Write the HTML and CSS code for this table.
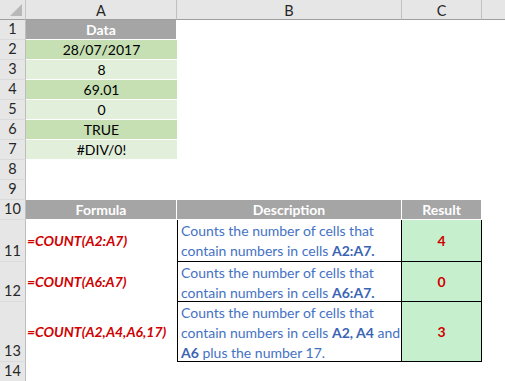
FILE: index.html
```html
<!DOCTYPE html>
<html lang="en">
<head>
<meta charset="utf-8">
<title>COUNT function</title>
<link rel="stylesheet" href="styles.css">
</head>
<body>
<div class="sheet">
  <div class="corner"><svg class="tri" width="12" height="12" viewBox="0 0 12 12"><polygon points="12,0 12,12 0,12" fill="#b8b8b8"/></svg></div>
  <div class="colhdr">A</div>
  <div class="colhdr">B</div>
  <div class="colhdr">C</div>
  <div class="colhdr blank"></div>

  <div class="rowhdr">1</div>
  <div class="cell head">Data</div>
  <div class="cell"></div><div class="cell"></div><div class="cell"></div>

  <div class="rowhdr">2</div>
  <div class="cell dark">28/07/2017</div>
  <div class="cell"></div><div class="cell"></div><div class="cell"></div>

  <div class="rowhdr">3</div>
  <div class="cell light">8</div>
  <div class="cell"></div><div class="cell"></div><div class="cell"></div>

  <div class="rowhdr">4</div>
  <div class="cell dark">69.01</div>
  <div class="cell"></div><div class="cell"></div><div class="cell"></div>

  <div class="rowhdr">5</div>
  <div class="cell light">0</div>
  <div class="cell"></div><div class="cell"></div><div class="cell"></div>

  <div class="rowhdr">6</div>
  <div class="cell dark">TRUE</div>
  <div class="cell"></div><div class="cell"></div><div class="cell"></div>

  <div class="rowhdr">7</div>
  <div class="cell light">#DIV/0!</div>
  <div class="cell"></div><div class="cell"></div><div class="cell"></div>

  <div class="rowhdr">8</div>
  <div class="cell"></div><div class="cell"></div><div class="cell"></div><div class="cell"></div>

  <div class="rowhdr">9</div>
  <div class="cell"></div><div class="cell"></div><div class="cell"></div><div class="cell"></div>

  <div class="rowhdr">10</div>
  <div class="cell head">Formula</div>
  <div class="cell head">Description</div>
  <div class="cell head">Result</div>
  <div class="cell"></div>

  <div class="rowhdr">11</div>
  <div class="cell formula">=COUNT(A2:A7)</div>
  <div class="cell desc"><span class="ln">Counts the number of cells that</span><span class="ln">contain numbers in cells <b>A2:A7.</b></span></div>
  <div class="cell result">4</div>
  <div class="cell"></div>

  <div class="rowhdr">12</div>
  <div class="cell formula">=COUNT(A6:A7)</div>
  <div class="cell desc"><span class="ln">Counts the number of cells that</span><span class="ln">contain numbers in cells <b>A6:A7.</b></span></div>
  <div class="cell result">0</div>
  <div class="cell"></div>

  <div class="rowhdr">13</div>
  <div class="cell formula">=COUNT(A2,A4,A6,17)</div>
  <div class="cell desc"><span class="ln">Counts the number of cells that</span><span class="ln">contain numbers in cells <b>A2, A4</b> and</span><span class="ln"><b>A6</b> plus the number 17.</span></div>
  <div class="cell result">3</div>
  <div class="cell"></div>

  <div class="rowhdr">14</div>
  <div class="cell"></div><div class="cell"></div><div class="cell"></div><div class="cell"></div>
</div>
</body>
</html>
```

FILE: styles.css
```css
* { box-sizing: border-box; }
html, body { margin: 0; padding: 0; background: #fff; }
body {
  font-family: Lato, "Liberation Sans", sans-serif;
  font-size: 14px;
  color: #000;
  width: 505px;
  height: 381px;
  overflow: hidden;
}
.sheet {
  display: grid;
  grid-template-columns: 26px 151px 225px 80px 23px;
  grid-template-rows: 20px repeat(10, 20px) 42px 40px 60px 20px;
}
.corner {
  background: #e6e6e6;
  border-right: 1px solid #c6c6c6;
  border-bottom: 1px solid #9e9e9e;
  display: flex;
  align-items: flex-end;
  justify-content: flex-end;
  padding: 0 3px 3px 0;
}
.tri { display: block; }
.colhdr {
  background: #e6e6e6;
  border-right: 1px solid #c0c0c0;
  border-bottom: 1px solid #9e9e9e;
  display: flex;
  align-items: center;
  justify-content: center;
  color: #262626;
  font-size: 14.5px;
  padding-top: 1px;
}
.colhdr.blank { border-right: none; }
.rowhdr {
  background: #e6e6e6;
  border-right: 1px solid #bdbdbd;
  border-bottom: 1px solid #dadada;
  display: flex;
  align-items: flex-end;
  justify-content: center;
  color: #262626;
  font-size: 14.5px;
  line-height: 18px;
  padding-bottom: 1px;
}
.cell {
  display: flex;
  align-items: center;
  justify-content: center;
  line-height: 20px;
  white-space: nowrap;
}
.head {
  background: #a5a5a5;
  color: #fff;
  font-weight: bold;
  border-right: 1px solid #fff;
  border-bottom: 1px solid #fff;
}
.dark {
  background: #c6e0b4;
  border-bottom: 1px solid #fff;
}
.light {
  background: #e2efda;
  border-bottom: 1px solid #fff;
}
.formula {
  justify-content: flex-start;
  padding-left: 1px;
  color: #d00000;
  font-weight: bold;
  font-style: italic;
}
.desc {
  flex-direction: column;
  align-items: flex-start;
  justify-content: flex-start;
  color: #4472c4;
  padding: 1px 3px 0 3px;
  border-left: 1px solid #000;
  border-right: 1px solid #000;
  border-bottom: 1px solid #000;
}
.ln { display: block; height: 20px; }
.desc b { color: #3a64b4; }
.result {
  background: #c6efce;
  color: #d00000;
  font-weight: bold;
  border-right: 1px solid #000;
  border-bottom: 1px solid #000;
}
```
